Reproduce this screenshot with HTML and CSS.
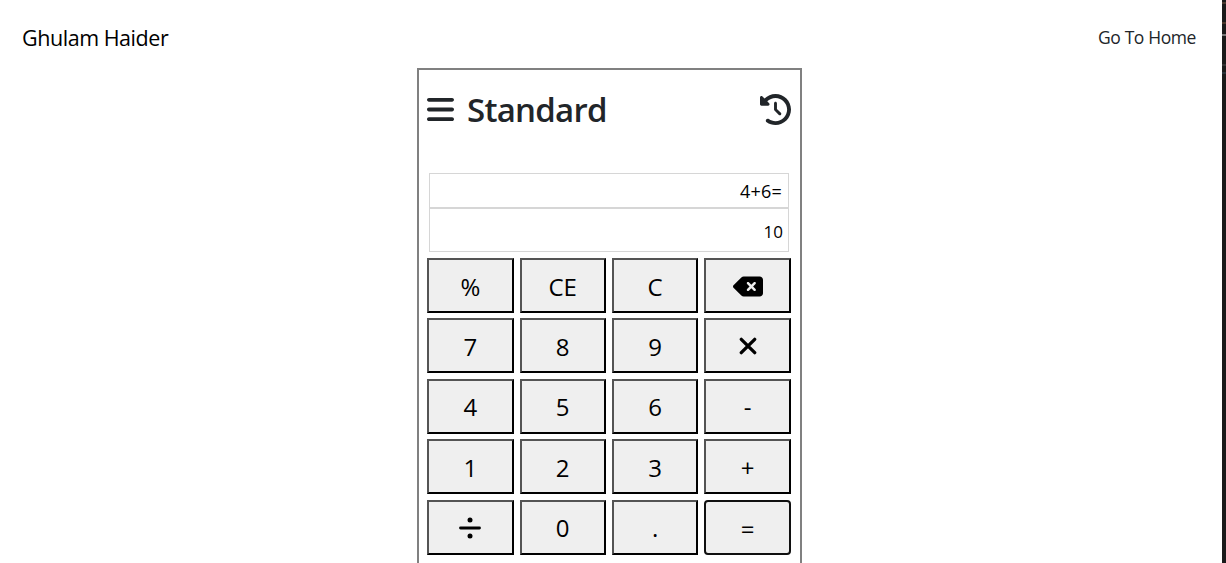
FILE: index.html
```html
<!DOCTYPE html>
<html lang="en">
<head>
<meta charset="utf-8">
<title>Calculator</title>
<link rel="stylesheet" href="styles.css">
</head>
<body>
<div class="page">
  <div class="content">
  <header class="navbar">
    <div class="brand">Ghulam Haider</div>
    <a class="home-link">Go To Home</a>
  </header>
  <main class="calculator">
    <div class="calc-header">
      <svg class="menu-icon" viewBox="0 0 448 512"><path d="M0 96C0 78.300 14.300 64 32 64H416c17.700 0 32 14.300 32 32s-14.300 32-32 32H32C14.300 128 0 113.700 0 96zM0 256c0-17.700 14.300-32 32-32H416c17.700 0 32 14.300 32 32s-14.300 32-32 32H32c-17.700 0-32-14.300-32-32zM448 416c0 17.700-14.300 32-32 32H32c-17.700 0-32-14.300-32-32s14.300-32 32-32H416c17.700 0 32 14.300 32 32z"/></svg>
      <h1 class="title">Standard</h1>
      <svg class="history-icon" viewBox="0 0 512 512"><path d="M75 75L41 41C25.900 25.900 0 36.600 0 57.900V168c0 13.300 10.700 24 24 24H134.100c21.400 0 32.100-25.900 17-41l-30.800-30.800C155 85.500 203 64 256 64c106 0 192 86 192 192s-86 192-192 192c-40.800 0-78.600-12.700-109.700-34.400c-14.500-10.100-34.400-6.600-44.600 7.900s-6.600 34.400 7.900 44.600C151.200 495 201.700 512 256 512c141.400 0 256-114.600 256-256S397.400 0 256 0C185.300 0 121.300 28.700 75 75zm181 53c-13.300 0-24 10.700-24 24V256c0 6.400 2.500 12.500 7 17l72 72c9.400 9.400 24.600 9.400 33.900 0s9.400-24.600 0-33.900l-65-65V152c0-13.300-10.700-24-24-24z"/></svg>
    </div>
    <div class="display">
      <div class="expression">4+6=</div>
      <div class="result">10</div>
    </div>
    <div class="keys">
      <button class="key">%</button>
      <button class="key">CE</button>
      <button class="key">C</button>
      <button class="key"><svg class="icon-delete" viewBox="0 0 576 512"><path d="M576 128c0-35.300-28.700-64-64-64H205.300c-17 0-33.300 6.700-45.300 18.700L9.400 233.400c-6 6-9.400 14.100-9.400 22.600s3.400 16.600 9.400 22.600L160 429.300c12 12 28.300 18.700 45.300 18.700H512c35.300 0 64-28.700 64-64V128zM271 175c9.400-9.400 24.600-9.400 33.900 0l47 47 47-47c9.400-9.400 24.600-9.400 33.900 0s9.400 24.600 0 33.900l-47 47 47 47c9.400 9.400 9.400 24.600 0 33.900s-24.600 9.400-33.900 0l-47-47-47 47c-9.400 9.400-24.600 9.400-33.900 0s-9.400-24.600 0-33.900l47-47-47-47c-9.400-9.400-9.400-24.600 0-33.900z"/></svg></button>
      <button class="key">7</button>
      <button class="key">8</button>
      <button class="key">9</button>
      <button class="key"><svg class="icon-times" viewBox="0 0 18 18"><path d="M2.300 2.300L15.700 15.700M15.700 2.300L2.300 15.700"/></svg></button>
      <button class="key">4</button>
      <button class="key">5</button>
      <button class="key">6</button>
      <button class="key">-</button>
      <button class="key">1</button>
      <button class="key">2</button>
      <button class="key">3</button>
      <button class="key sign">+</button>
      <button class="key"><svg class="icon-divide" viewBox="0 0 22 22"><path d="M1.500 11H20.500"/><circle cx="11" cy="3" r="2.500"/><circle cx="11" cy="19" r="2.500"/></svg></button>
      <button class="key">0</button>
      <button class="key">.</button>
      <button class="key sign active">=</button>
    </div>
  </main>
  </div>
  <div class="edge"></div>
</div>
</body>
</html>
```
FILE: styles.css
```css
* { box-sizing: border-box; }

body {
  margin: 0;
  height: 563px;
  overflow: hidden;
  background: #fff;
  color: #000;
  font-family: "Segoe UI", "Open Sans", "Noto Sans", sans-serif;
}

.page {
  display: flex;
  height: 563px;
  overflow: hidden;
}

.content { flex: 1; }

.edge {
  width: 4px;
  background:
    linear-gradient(#4a3a30, #4a3a30) 0 2px / 4px 2px no-repeat,
    linear-gradient(#49372b, #49372b) 0 22px / 4px 2px no-repeat,
    linear-gradient(#777, #777) 0 34px / 4px 2px no-repeat,
    linear-gradient(#333, #333) 0 64px / 4px 2px no-repeat,
    linear-gradient(#29333a, #29333a) 0 72px / 4px 2px no-repeat,
    #1a1a1a;
}

.navbar {
  display: flex;
  justify-content: space-between;
  align-items: center;
  height: 68px;
  padding: 6px 26px 0 22px;
}

.brand { font-size: 21.500px; letter-spacing: -0.450px; }
.home-link { font-size: 17.500px; letter-spacing: -0.400px; color: #212529; }

.calculator {
  width: 385px;
  height: 520px;
  margin-left: 417px;
  padding: 0 9px 0 8px;
  border: 2px solid #808080;
}

.calc-header {
  display: flex;
  align-items: center;
  height: 78px;
  color: #212529;
}

.menu-icon { width: 27px; height: 31px; fill: #212529; }
.title {
  margin: 2px 0 0 13px;
  font-size: 33px;
  font-weight: 600;
  line-height: 40px;
  letter-spacing: -0.750px;
}
.history-icon { width: 31px; height: 31px; margin-left: auto; fill: #212529; }

.display { margin: 25px 2px 6px; }

.expression,
.result {
  display: flex;
  align-items: center;
  justify-content: flex-end;
  padding-right: 5px;
  border: 1px solid #d6d6d6;
  font-size: 17px;
}
.expression {
  height: 35px;
  padding-top: 1px;
  padding-right: 6px;
  font-size: 18px;
  letter-spacing: 0.200px;
}
.result { height: 44px; padding-top: 3px; }

.keys {
  display: grid;
  grid-template-columns: repeat(4, 86.450px);
  grid-auto-rows: 55px;
  gap: 5.400px 5.970px;
  padding-left: 0.100px;
}

.key {
  display: flex;
  align-items: center;
  justify-content: center;
  padding: 1px 0 0;
  border: 2px solid;
  border-color: #545454 #000 #000 #545454;
  border-radius: 0;
  background: #efefef;
  color: #000;
  font-family: inherit;
  font-size: 24px;
}
.sign { padding-top: 2px; }
.active { border-color: #101010; border-radius: 4px; }

.icon-delete { width: 30px; height: 27px; }
.icon-times {
  width: 18px;
  height: 18px;
  fill: none;
  stroke: #000;
  stroke-width: 3.300;
  stroke-linecap: round;
}
.icon-divide {
  width: 22px;
  height: 22px;
  stroke-linecap: round;
}
.icon-divide path { stroke: #000; stroke-width: 2.800; }
```
